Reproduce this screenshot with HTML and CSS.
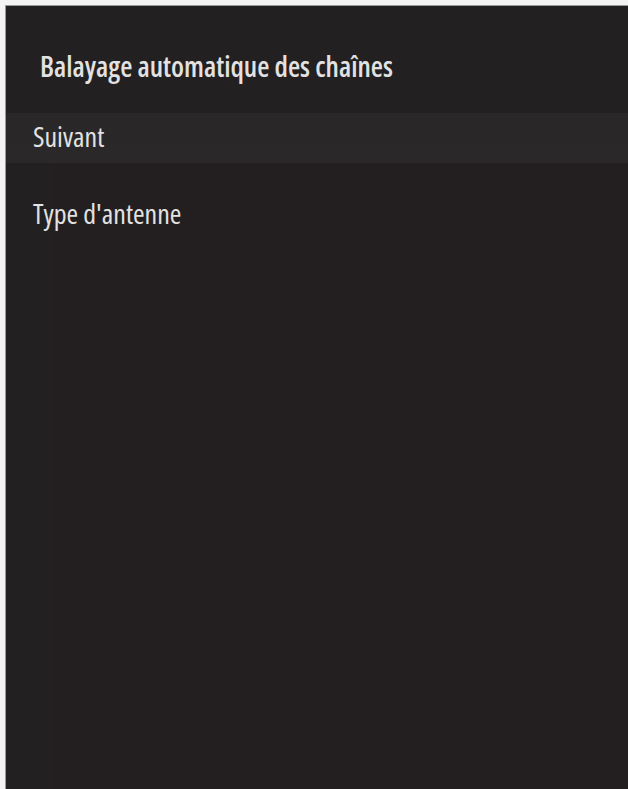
FILE: index.html
```html
<!DOCTYPE html>
<html lang="fr">
<head>
<meta charset="utf-8">
<link rel="stylesheet" href="styles.css">
</head>
<body>
<div class="panel">
  <div class="header">
    <h1 class="title">Balayage automatique des chaînes</h1>
  </div>
  <ul class="menu">
    <li class="item selected">Suivant</li>
    <li class="item">Type d'antenne</li>
  </ul>
</div>
</body>
</html>
```
FILE: styles.css
```css
html, body {
  margin: 0;
  padding: 0;
  background: #f4f4f4;
  height: 100%;
}
body {
  padding: 5px 0 0 5px;
  box-sizing: border-box;
}
.panel {
  height: 100%;
  background: linear-gradient(90deg, #222021 0, #222021 48px, #231f20 48px);
  border-top: 1px solid #9a9a9a;
  border-left: 1px solid #9a9a9a;
  box-sizing: border-box;
  font-family: "Open Sans", sans-serif;
  font-stretch: 75%;
  color: #e2e2e2;
}
.header {
  height: 107px;
  background: #222021;
  padding: 46px 0 0 34px;
  box-sizing: border-box;
}
.title {
  margin: 0;
  font-size: 28px;
  line-height: 28px;
  font-weight: 600;
}
.menu {
  list-style: none;
  margin: 0;
  padding: 0;
}
.item {
  height: 50px;
  padding: 9px 0 0 27px;
  box-sizing: border-box;
  font-size: 28px;
  line-height: 28px;
  font-weight: 500;
}
.item.selected {
  background: linear-gradient(#2a2728, #2b2829);
}
.item + .item {
  margin-top: 27px;
}
```
